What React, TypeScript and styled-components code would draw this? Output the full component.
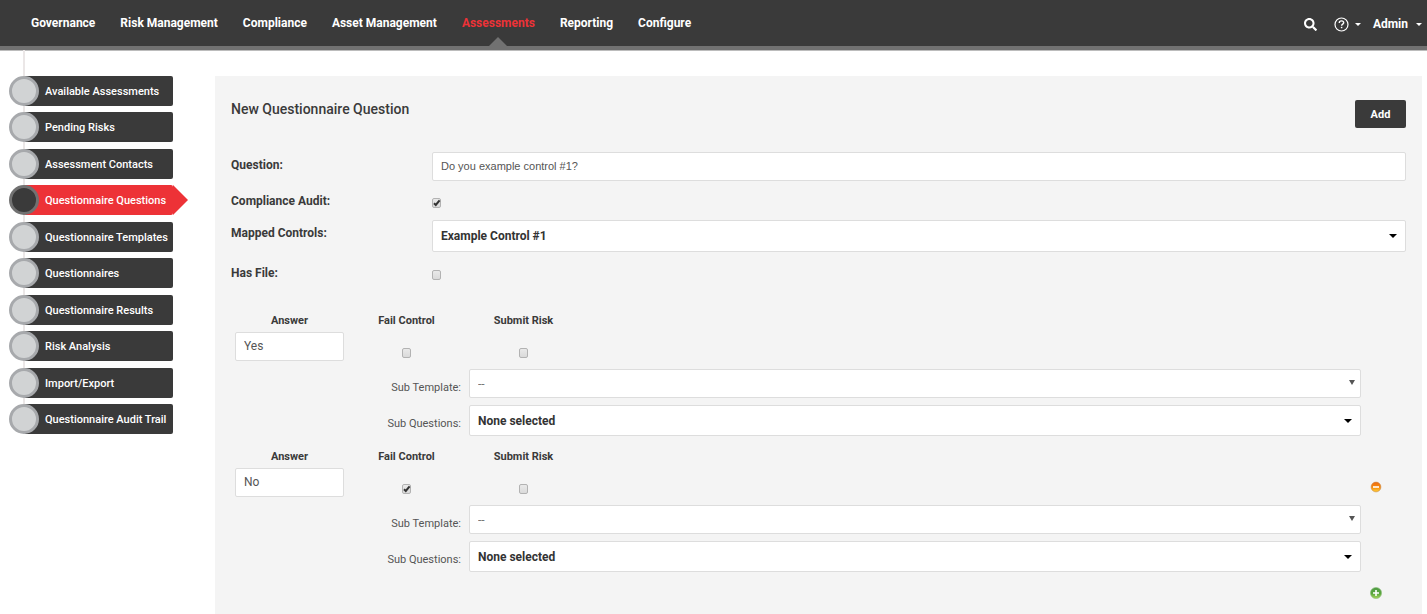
import React, { useId } from "react";
import styled, { createGlobalStyle, css } from "styled-components";
import { FaSearch } from "react-icons/fa";

const ink = "#3a3a3a";
const red = "#ed3237";

const GlobalStyle = createGlobalStyle`
  *, *::before, *::after { box-sizing: border-box; }
  body {
    margin: 0;
    background: #fff;
    color: ${ink};
    font: 12px/16px Roboto, "Open Sans", sans-serif;
  }
  input, select, button { font-family: inherit; margin: 0; }
`;

const Page = styled.div`
  min-height: 100vh;
  display: flex;
  flex-direction: column;
`;

const Header = styled.header`
  display: flex;
  justify-content: space-between;
  height: 50px;
  padding: 0 5px 0 31px;
  background: ${ink};
  border-bottom: 4px solid #717171;
  box-shadow: 0 1px #bcbcbc;
`;

const Nav = styled.nav`
  display: flex;
  gap: 25px;
`;

const NavLink = styled.a<{ $active?: boolean }>`
  position: relative;
  line-height: 46px;
  font-size: 12px;
  font-weight: 700;
  color: ${(p) => (p.$active ? red : "#fff")};
  text-decoration: none;
  white-space: nowrap;
  ${(p) =>
    p.$active &&
    css`
      &::after {
        content: "";
        position: absolute;
        left: 50%;
        bottom: 0;
        margin-left: -9px;
        border: 9px solid transparent;
        border-top-width: 0;
        border-bottom-color: #717171;
      }
    `}
`;

const Tools = styled.div`
  display: flex;
  align-items: center;
  gap: 12px;
  height: 48px;
`;

const ToolButton = styled.button`
  display: flex;
  align-items: center;
  gap: 6px;
  padding: 0;
  border: 0;
  background: none;
  color: #fff;
  font-size: 12px;
  font-weight: 700;
  line-height: 16px;
`;

const SearchButton = styled(ToolButton)`
  margin-right: 5px;
`;

const Caret = styled.i`
  border: 3px solid transparent;
  border-top-color: currentColor;
  border-bottom-width: 0;
`;

const AdminButton = styled(ToolButton)`
  gap: 8px;
`;

const Body = styled.div`
  flex: 1;
  display: flex;
  padding-right: 5px;
`;

const Sidebar = styled.aside`
  flex: none;
  width: 215px;
`;

const Steps = styled.ul`
  position: relative;
  display: flex;
  flex-direction: column;
  justify-content: space-between;
  min-height: 384px;
  width: 173px;
  margin: 0;
  padding: 26px 0 0 9px;
  list-style: none;
  &::before {
    content: "";
    position: absolute;
    left: 23px;
    top: 0;
    bottom: 8px;
    width: 2px;
    background: #ebe7e7;
  }
`;

const Step = styled.a<{ $active?: boolean }>`
  position: relative;
  display: flex;
  align-items: center;
  height: 30px;
  margin-left: 15px;
  padding: 2px 0 0 21px;
  border-radius: 2px;
  background: ${(p) => (p.$active ? red : ink)};
  color: #fff;
  font-size: 11px;
  font-weight: 500;
  text-decoration: none;
  white-space: nowrap;
  &::before {
    content: "";
    position: absolute;
    left: -15px;
    top: 0;
    width: 30px;
    height: 30px;
    border-radius: 50%;
    border: 3px solid ${(p) => (p.$active ? "#717171" : "#a7a9ac")};
    background: ${(p) => (p.$active ? ink : "#d1d3d4")};
  }
  ${(p) =>
    p.$active &&
    css`
      &::after {
        content: "";
        position: absolute;
        left: 100%;
        top: 0;
        border: 15px solid transparent;
        border-right-width: 0;
        border-left-color: ${red};
      }
    `}
`;

const Panel = styled.main`
  flex: 1;
  min-width: 0;
  margin-top: 26px;
  padding: 24px 16px 14px;
  background: #f4f4f4;
`;

const PanelHead = styled.div`
  display: flex;
  justify-content: space-between;
  margin-bottom: 24px;
`;

const Title = styled.h1`
  margin: 0;
  font-size: 14px;
  line-height: 18px;
  font-weight: 500;
`;

const AddButton = styled.button`
  width: 51px;
  height: 28px;
  border: 0;
  border-radius: 2px;
  background: ${ink};
  color: #fff;
  font-size: 11px;
  font-weight: 700;
`;

const Fields = styled.div`
  display: grid;
  grid-template-columns: 201px 1fr;
  grid-template-rows: 29px 39px 33px 40px;
  margin-bottom: 20px;
`;

const Label = styled.label`
  padding-top: 5px;
  font-size: 12px;
  line-height: 16px;
  font-weight: 700;
`;

const LowLabel = styled(Label)`
  padding-top: 12px;
`;

const CheckCell = styled.div`
  padding-top: 17px;
`;

const TextInput = styled.input`
  display: block;
  width: 100%;
  height: 29px;
  padding: 0 8px 2px;
  border: 1px solid #ddd;
  border-radius: 2px;
  background: #fff;
  color: #555;
  font-size: 12px;
`;

const SansInput = styled(TextInput)`
  && {
    font-family: "Liberation Sans", Arial, sans-serif;
    font-size: 11px;
  }
`;

const SelectWrap = styled.div<{ $plain?: boolean }>`
  position: relative;
  &::after {
    content: "";
    position: absolute;
    right: ${(p) => (p.$plain ? 6 : 9)}px;
    top: ${(p) => (p.$plain ? 11 : 14)}px;
    border-style: solid;
    border-color: ${(p) => (p.$plain ? "#555" : "#000")} transparent transparent;
    border-width: ${(p) => (p.$plain ? "5px 3px 0" : "4px 4px 0")};
    pointer-events: none;
  }
`;

const Select = styled.select<{ $height: number; $plain?: boolean }>`
  appearance: none;
  display: block;
  width: 100%;
  height: ${(p) => p.$height}px;
  padding: 0 24px 0 8px;
  border: 1px solid #ddd;
  border-radius: 2px;
  background: #fff;
  color: ${(p) => (p.$plain ? "#777" : "#333")};
  font-size: 12px;
  font-weight: ${(p) => (p.$plain ? 400 : 700)};
`;

const CheckWrap = styled.span`
  position: relative;
  display: inline-block;
  width: 9px;
  height: 10px;
  vertical-align: top;
  svg {
    display: none;
    position: absolute;
    left: 1px;
    top: 1px;
    pointer-events: none;
  }
  input:checked + svg { display: block; }
`;

const CheckBox = styled.input`
  appearance: none;
  display: block;
  width: 9px;
  height: 10px;
  border: 1px solid #b2b2b2;
  border-radius: 2px;
  background: linear-gradient(#e9e9e9, #dadada);
`;

const AnswerGrid = styled.fieldset`
  display: grid;
  grid-template-columns: 117px 117px 117px 1fr 41px;
  grid-template-rows: 19px 36px 36px 45px;
  margin: 0;
  padding: 0;
  border: 0;
`;

const Head = styled.label`
  text-align: center;
  font-size: 11px;
  font-weight: 700;
`;

const AnswerCell = styled.div`
  grid-column: 1;
  padding: 0 4px;
`;

const MarkCell = styled.div`
  padding-top: 16px;
  text-align: center;
`;

const IconCell = styled.div`
  grid-column: 5;
  padding: 13px 0 0 5px;
`;

const IconButton = styled.button`
  display: block;
  padding: 0;
  border: 0;
  background: none;
  svg { display: block; }
`;

const SubLabel = styled.label`
  grid-column: 1 / 3;
  padding: 12px 4px 0;
  text-align: right;
  font-size: 11px;
  color: #555;
`;

const SubField = styled.div`
  grid-column: 3 / 5;
  padding: 1px 4px 0;
`;

const AddRow = styled.div`
  display: flex;
  justify-content: flex-end;
  padding: 2px 24px 0 0;
`;

function Check({ id, checked }: { id: string; checked?: boolean }) {
  return (
    <CheckWrap>
      <CheckBox type="checkbox" id={id} defaultChecked={checked} />
      <svg width="8" height="8" viewBox="0 0 8 8" fill="none" stroke="#333" strokeWidth="2">
        <path d="M1 4.2 2.8 6 6.6 1.4" />
      </svg>
    </CheckWrap>
  );
}

function HelpIcon() {
  return (
    <svg width="15" height="15" viewBox="0 0 15 15" fill="none" stroke="#fff">
      <circle cx="7.5" cy="7.5" r="6.5" strokeWidth="1.2" />
      <path d="M5.3 6V5.7C5.3 4.6 6.2 3.9 7.5 3.9S9.7 4.7 9.7 5.7C9.7 7.1 7.6 7.1 7.6 8.8" strokeWidth="1.4" />
      <path d="M7.6 9.8V11.2" strokeWidth="1.5" />
    </svg>
  );
}

function RoundIcon({ kind }: { kind: "add" | "remove" }) {
  const add = kind === "add";
  const id = useId();
  return (
    <svg width="12" height="12" viewBox="0 0 12 12">
      <defs>
        <linearGradient id={id} x1="0" y1="0" x2="0" y2="1">
          <stop offset="0" stopColor={add ? "#4f9b45" : "#ef6a10"} />
          <stop offset="0.55" stopColor={add ? "#5aa63d" : "#f78d0d"} />
          <stop offset="1" stopColor={add ? "#a6d65c" : "#ffd23c"} />
        </linearGradient>
      </defs>
      <circle cx="6" cy="6" r={add ? 5.6 : 4.9} fill={`url(#${id})`} stroke={add ? "#8fbf80" : "#c98a4a"} strokeWidth="0.6" />
      <path d={add ? "M3 6H9M6 3V9" : "M3 6H9"} stroke="#fff" strokeWidth="1.6" />
    </svg>
  );
}

function AnswerBlock({ answer, fail, removable }: { answer: string; fail?: boolean; removable?: boolean }) {
  const id = useId();
  return (
    <AnswerGrid>
      <Head htmlFor={`${id}a`}>Answer</Head>
      <Head htmlFor={`${id}f`}>Fail Control</Head>
      <Head htmlFor={`${id}r`}>Submit Risk</Head>
      <AnswerCell>
        <TextInput id={`${id}a`} defaultValue={answer} />
      </AnswerCell>
      <MarkCell><Check id={`${id}f`} checked={fail} /></MarkCell>
      <MarkCell><Check id={`${id}r`} /></MarkCell>
      <IconCell>
        {removable && (
          <IconButton type="button" aria-label="Remove answer"><RoundIcon kind="remove" /></IconButton>
        )}
      </IconCell>
      <SubLabel htmlFor={`${id}t`}>Sub Template:</SubLabel>
      <SubField>
        <SelectWrap $plain>
          <Select id={`${id}t`} $height={29} $plain><option>--</option></Select>
        </SelectWrap>
      </SubField>
      <SubLabel htmlFor={`${id}q`}>Sub Questions:</SubLabel>
      <SubField>
        <SelectWrap>
          <Select id={`${id}q`} $height={31}><option>None selected</option></Select>
        </SelectWrap>
      </SubField>
    </AnswerGrid>
  );
}

const navItems = ["Governance", "Risk Management", "Compliance", "Asset Management", "Assessments", "Reporting", "Configure"];

const steps = [
  "Available Assessments",
  "Pending Risks",
  "Assessment Contacts",
  "Questionnaire Questions",
  "Questionnaire Templates",
  "Questionnaires",
  "Questionnaire Results",
  "Risk Analysis",
  "Import/Export",
  "Questionnaire Audit Trail",
];

export default function App() {
  return (
    <Page>
      <GlobalStyle />
      <Header>
        <Nav>
          {navItems.map((item) => (
            <NavLink key={item} href="#" $active={item === "Assessments"}>{item}</NavLink>
          ))}
        </Nav>
        <Tools>
          <SearchButton type="button" aria-label="Search"><FaSearch size={13} /></SearchButton>
          <ToolButton type="button" aria-label="Help"><HelpIcon /><Caret /></ToolButton>
          <AdminButton type="button">Admin<Caret /></AdminButton>
        </Tools>
      </Header>
      <Body>
        <Sidebar>
          <Steps>
            {steps.map((step) => (
              <li key={step}>
                <Step href="#" $active={step === "Questionnaire Questions"}>{step}</Step>
              </li>
            ))}
          </Steps>
        </Sidebar>
        <Panel>
          <PanelHead>
            <Title>New Questionnaire Question</Title>
            <AddButton type="button">Add</AddButton>
          </PanelHead>
          <Fields>
            <Label htmlFor="question">Question:</Label>
            <SansInput id="question" defaultValue="Do you example control #1?" />
            <LowLabel htmlFor="audit">Compliance Audit:</LowLabel>
            <CheckCell><Check id="audit" checked /></CheckCell>
            <Label htmlFor="controls">Mapped Controls:</Label>
            <SelectWrap>
              <Select id="controls" $height={32}><option>Example Control #1</option></Select>
            </SelectWrap>
            <LowLabel htmlFor="file">Has File:</LowLabel>
            <CheckCell><Check id="file" /></CheckCell>
          </Fields>
          <AnswerBlock answer="Yes" />
          <AnswerBlock answer="No" fail removable />
          <AddRow>
            <IconButton type="button" aria-label="Add answer"><RoundIcon kind="add" /></IconButton>
          </AddRow>
        </Panel>
      </Body>
    </Page>
  );
}
